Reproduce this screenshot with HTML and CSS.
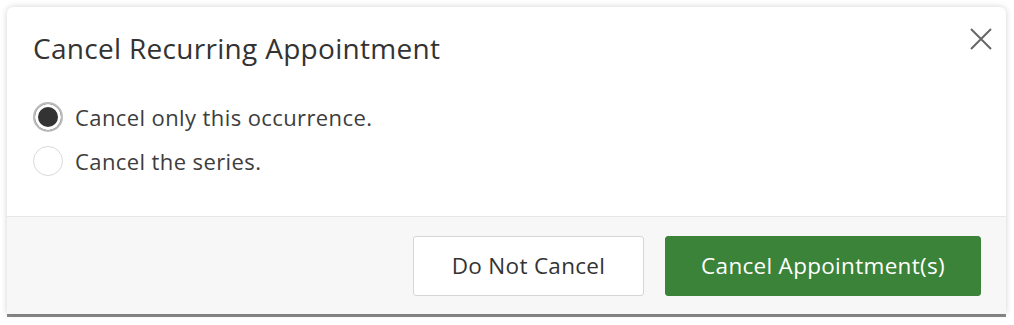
FILE: index.html
```html
<!DOCTYPE html>
<html lang="en">
<head>
    <meta charset="UTF-8">
    <title>Cancel Recurring Appointment</title>
    <link rel="stylesheet" href="styles.css">
</head>
<body>
    <div class="modal">
        <div class="modal_body">
            <div class="modal_header">
                <h2 class="modal_title">Cancel Recurring Appointment</h2>
                <span class="close_btn">
                    <svg width="22" height="22" viewBox="0 0 22 22"><path d="M1 1L21 21M21 1L1 21" stroke="#666" stroke-width="2" fill="none"/></svg>
                </span>
            </div>
            <ul class="options">
                <li><span class="radio checked"></span>Cancel only this occurrence.</li>
                <li><span class="radio"></span>Cancel the series.</li>
            </ul>
        </div>
        <div class="modal_footer">
            <button class="btn btn_plain">Do Not Cancel</button>
            <button class="btn btn_green">Cancel Appointment(s)</button>
        </div>
    </div>
</body>
</html>
```

FILE: styles.css
```css
*{
    padding: 0;
    margin: 0;
    box-sizing: border-box;
}

html, body{
    height: 100%;
}

body{
    background: #fff;
    font-family: "Open Sans", sans-serif;
    color: #333;
    padding: 7px 8px 0 7px;
}

.modal{
    width: 999px;
    background: #fff;
    border-radius: 6px 6px 0 0;
    box-shadow: 0 0 6px rgba(0,0,0,.18), 0 3px 0 #8a8a8a;
}

.modal_body{
    padding: 26px 12px 0 26px;
    height: 210px;
    border-bottom: 1px solid #e6e6e6;
}

.modal_header{
    display: flex;
    justify-content: space-between;
    align-items: flex-start;
}

.modal_title{
    font-size: 28px;
    font-weight: 400;
    color: #333;
    line-height: 30px;
    letter-spacing: 0.3px;
}

.close_btn{
    margin-top: -7px;
    padding: 2px;
    cursor: pointer;
}

.options{
    list-style: none;
    margin-top: 39px;
}

.options li{
    display: flex;
    align-items: center;
    font-size: 22px;
    color: #3d3d3d;
    height: 30px;
    margin-bottom: 14px;
    letter-spacing: 0.4px;
}

.radio{
    width: 30px;
    height: 30px;
    border-radius: 50%;
    border: 1px solid #d9d9d9;
    margin-right: 12px;
}

.radio.checked{
    border: 2px solid #bbb;
    box-shadow: inset 0 0 0 3px #fff;
    background: #333;
}

.modal_footer{
    background: #f7f7f7;
    height: 97px;
    display: flex;
    justify-content: flex-end;
    align-items: center;
    gap: 21px;
    padding: 0 25px 0 0;
}

.btn{
    height: 60px;
    border-radius: 3px;
    font-family: inherit;
    font-size: 22.5px;
    letter-spacing: 0.3px;
    cursor: pointer;
}

.btn_plain{
    width: 231px;
    background: #fff;
    border: 1px solid #d6d6d6;
    color: #333;
}

.btn_green{
    width: 316px;
    background: #3b8338;
    border: 1px solid #3b8338;
    color: #fff;
}
```
